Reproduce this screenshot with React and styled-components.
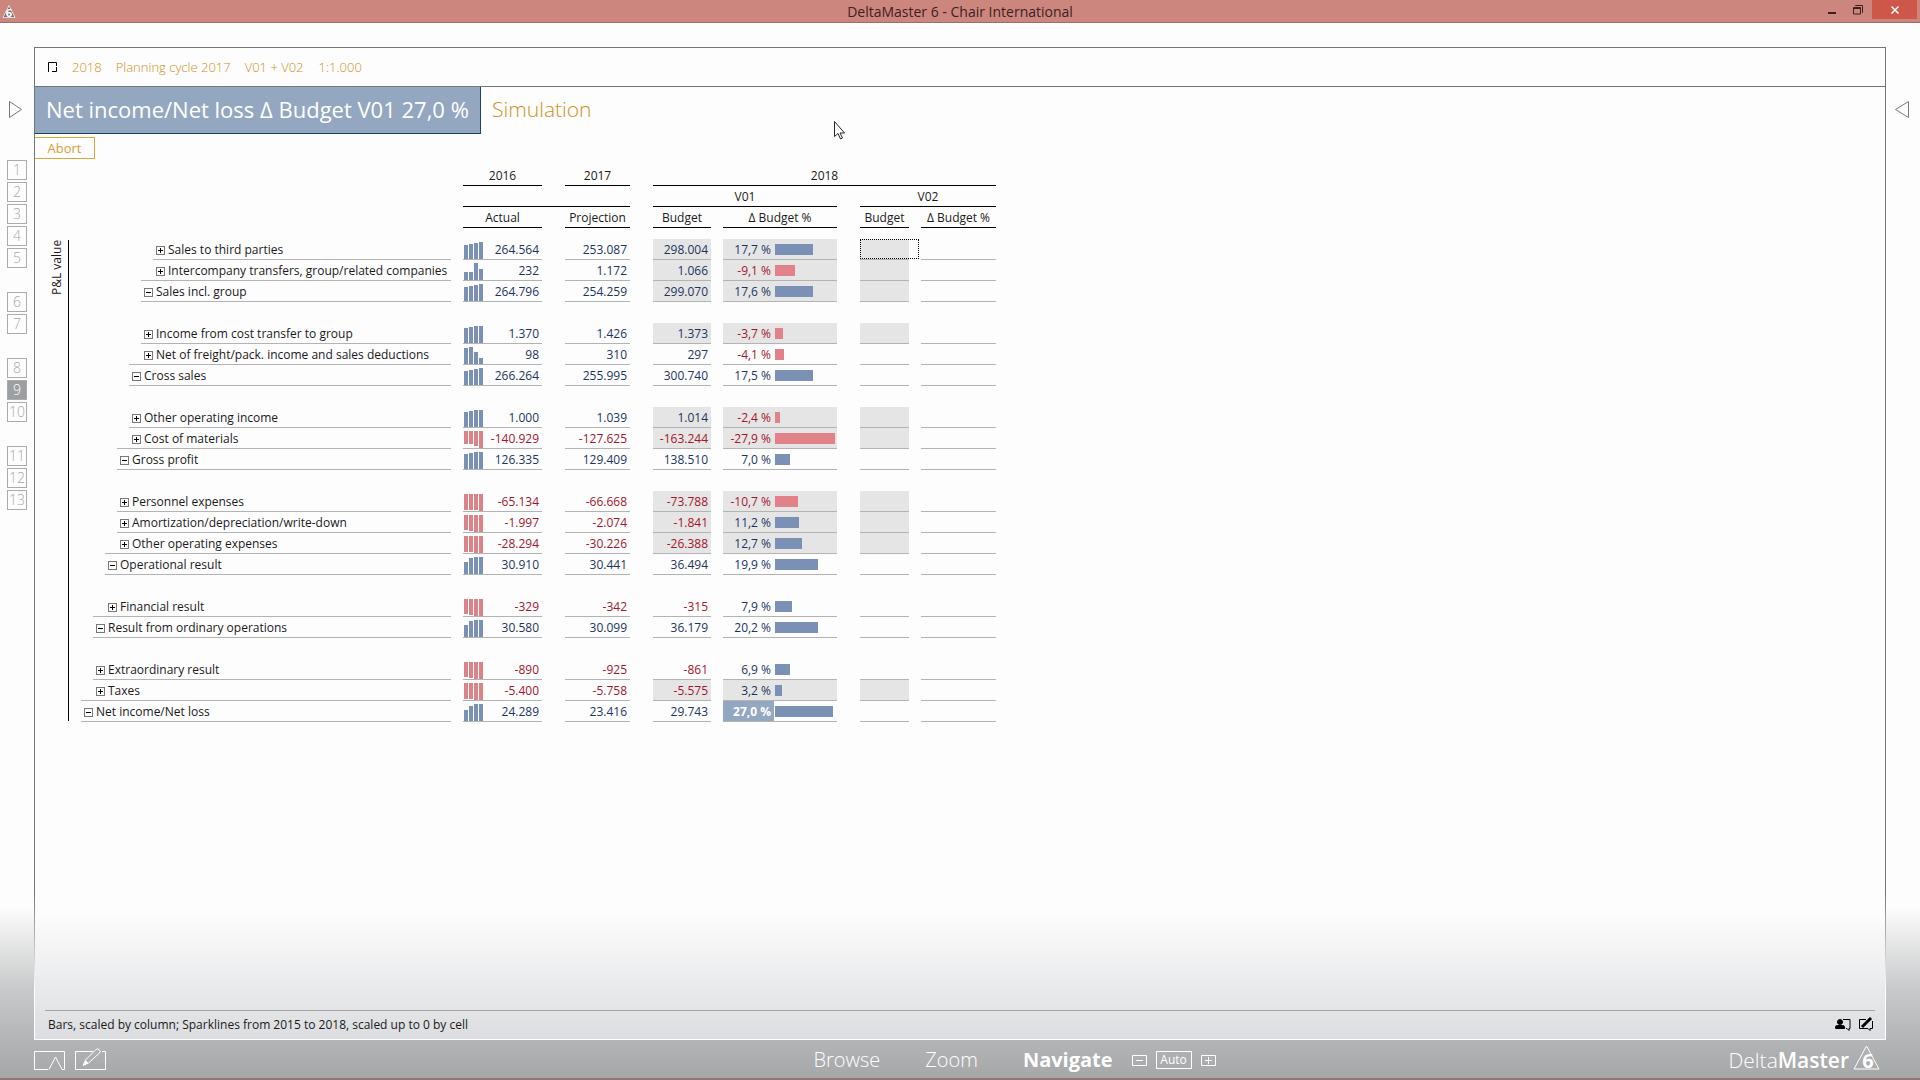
import React from 'react'
import styled, { createGlobalStyle } from 'styled-components'

const GlobalStyle = createGlobalStyle`
  * {
    box-sizing: border-box;
  }
  body {
    margin: 0;
    font-family: 'Open Sans', 'Noto Sans', sans-serif;
    font-size: 12px;
    line-height: 20px;
    color: #1a1a1a;
  }
  button {
    font: inherit;
    color: inherit;
    padding: 0;
    border: 0;
    background: none;
  }
  svg {
    display: block;
    overflow: visible;
  }
`

const Window = styled.div`
  display: flex;
  flex-direction: column;
  min-height: 100vh;
  background: linear-gradient(
    #fdfdfd 0 calc(100% - 172px),
    #c9cacb calc(100% - 90px),
    #b4b5b6 calc(100% - 40px),
    #a6a7a9
  );
  border-bottom: 2px solid #8f7477;
`

const TitleBar = styled.header`
  display: grid;
  grid-template-columns: 1fr auto 1fr;
  height: 23px;
  background: #cd867e;
  border-bottom: 1px solid #96706d;
`

const AppIcon = styled.div`
  padding: 5px 1px;
`

const TitleText = styled.div`
  font-size: 14px;
  line-height: 24px;
  color: #3c211e;
`

const WindowButtons = styled.div`
  display: flex;
  justify-content: flex-end;
  padding-right: 3px;
`

const WindowButton = styled.button`
  display: flex;
  align-items: center;
  justify-content: center;
  width: ${props => (props.$close ? 45 : 26)}px;
  height: 19px;
  background: ${props => (props.$close ? '#cd5849' : 'none')};
`

const Body = styled.div`
  flex: 1;
  display: grid;
  grid-template-columns: 34px 1fr 34px;
  padding-top: 24px;
`

const Side = styled.aside`
  display: flex;
  flex-direction: column;
  align-items: flex-start;
  padding: 54px 7px 0;
`

const ArrowButton = styled.button`
  height: 17px;
  margin-bottom: 42px;
`

const PageList = styled.nav`
  display: flex;
  flex-direction: column;
  gap: 2px;
`

const PageButton = styled.button`
  width: 20px;
  height: 20px;
  margin-top: ${props => (props.$gap ? 22 : 0)}px;
  border: 1px solid #a9abad;
  background: ${props => (props.$active ? '#9c9ea0' : 'none')};
  color: ${props => (props.$active ? '#fff' : '#a8a8aa')};
  font-size: 14px;
  font-weight: 300;
  line-height: 18px;
`

const Panel = styled.main`
  display: flex;
  flex-direction: column;
  border: 1px solid;
  border-image: linear-gradient(#6f777c 0 calc(100% - 150px), #fff calc(100% - 50px)) 1;
  background: linear-gradient(#fdfdfd 0 calc(100% - 125px), #dcdde0);
`

const ViewBar = styled.div`
  display: flex;
  align-items: center;
  height: 39px;
  padding-left: 12px;
  border-bottom: 1px solid #6f777c;
  font-size: 13px;
  font-weight: 300;
  color: #cf9020;
`

const ViewLink = styled.a`
  margin-left: ${props => props.$space}px;
  color: inherit;
  text-decoration: none;
`

const Heading = styled.div`
  display: flex;
  font-size: 22px;
  line-height: 44px;
`

const Measure = styled.h1`
  width: 446px;
  margin: 0;
  padding: 0 0 2px 11px;
  border-right: 1px solid #1d3f6b;
  border-bottom: 1px solid #1d3f6b;
  background: #94a7c1;
  color: #fff;
  font-size: inherit;
  font-weight: 500;
  white-space: nowrap;
`

const Mode = styled.div`
  padding-left: 11px;
  color: #cf9020;
  font-size: 21px;
  font-weight: 300;
`

const AbortButton = styled.button`
  align-self: flex-start;
  width: 60px;
  height: 22px;
  margin-top: 3px;
  border: 1px solid #dba63c;
  border-left: 0;
  color: #d99e30;
  font-size: 13px;
`

const Report = styled.div`
  display: flex;
  padding: 6px 0 0 14px;
`

// Text runs bottom to top, so the rotated left border is the line on the right.
const AxisTitle = styled.div`
  width: 20px;
  height: 481px;
  margin-top: 75px;
  border-left: 1px solid #000;
  line-height: 16px;
  text-align: right;
  writing-mode: vertical-rl;
  transform: rotate(180deg);
`

const Table = styled.table`
  width: 915px;
  margin-left: 12px;
  table-layout: fixed;
  border-collapse: separate;
  border-spacing: 0;
`

const Head = styled.th`
  height: 21px;
  padding: 2px 0 0;
  border-bottom: 1px solid #000;
  font-weight: 400;
  line-height: 18px;
  text-align: center;
`

const Label = styled.th`
  height: 21px;
  padding: 0 0 0 ${props => props.$indent}px;
  font-weight: 400;
  text-align: left;
  white-space: nowrap;
`

const LabelLine = styled.div`
  display: flex;
  align-items: center;
  gap: 3px;
  height: 21px;
  padding-top: 2px;
  padding-left: ${props => props.$pad}px;
  border-bottom: 1px solid #b3b3b3;
`

const Toggle = styled.button`
  height: 9px;
`

const Cell = styled.td`
  height: 21px;
  padding: 0;
  border-bottom: 1px solid #b3b3b3;
  background: ${props => (props.$shaded ? '#e5e5e5' : 'none')};
  color: ${props => (props.$negative ? '#a3152b' : '#1c355e')};
`

const Blank = styled.td`
  padding: 0;
`

const Amount = styled.div`
  display: flex;
  align-items: center;
  justify-content: space-between;
  height: 20px;
  padding: 2px 3px 0 1px;
`

const Value = styled.span`
  margin-left: auto;
`

const Change = styled.div`
  display: flex;
  align-items: center;
  gap: 1px;
  height: 20px;
`

const ChangeValue = styled.span`
  width: 51px;
  height: 20px;
  padding-right: 3px;
  text-align: right;
  line-height: 22px;
  background: ${props => (props.$selected ? '#94a7c1' : 'none')};
  color: ${props => (props.$selected ? '#fff' : 'inherit')};
  font-weight: ${props => (props.$selected ? 700 : 400)};
`

const Bar = styled.span`
  height: 11px;
  background: ${props => (props.$negative ? '#e08288' : '#7a91b5')};
`

const Focus = styled.div`
  position: relative;
  height: 20px;
  &::after {
    content: '';
    position: absolute;
    inset: 0 -10px 0 0;
    border: 1px dotted #000;
  }
`

const Footer = styled.footer`
  display: flex;
  align-items: center;
  height: 29px;
  margin: auto 10px 0;
  padding: 0 1px 0 3px;
  border-top: 1px solid #a3a4a6;
`

const FooterIcons = styled.div`
  display: flex;
  gap: 7px;
  margin-left: auto;
`

const BottomBar = styled.div`
  display: grid;
  grid-template-columns: 1fr auto 1fr;
  align-items: center;
  height: 38px;
  padding: 2px 40px 0 34px;
  color: #fff;
`

const Tools = styled.div`
  display: flex;
  gap: 10px;
`

const Modes = styled.nav`
  display: flex;
  align-items: center;
  gap: 45px;
  padding-left: 12px;
`

const ModeButton = styled.button`
  font-size: 20px;
  font-weight: ${props => (props.$active ? 700 : 300)};
  line-height: 36px;
`

const Right = styled.div`
  display: flex;
  align-items: center;
  justify-content: space-between;
  padding-left: 19px;
`

const ZoomBox = styled.div`
  display: flex;
  align-items: center;
  gap: 9px;
`

const AutoButton = styled.button`
  width: 36px;
  height: 18px;
  border: 1px solid #fff;
  line-height: 16px;
`

const Brand = styled.div`
  display: flex;
  align-items: center;
  gap: 4px;
  font-size: 21px;
  font-weight: 300;
  strong {
    font-weight: 600;
  }
`

const Cursor = styled.svg`
  position: absolute;
  left: 834px;
  top: 121px;
`

// level, open, label, sparkline, actual, projection, budget, change, bar width, input cells shaded
const rows = [
  [6, 0, 'Sales to third parties', [14, 15, 16, 17], '264.564', '253.087', '298.004', '17,7 %', 38, 1],
  [6, 0, 'Intercompany transfers, group/related companies', [8, 8, 17, 11], '232', '1.172', '1.066', '-9,1 %', 20, 1],
  [5, 1, 'Sales incl. group', [14, 15, 16, 17], '264.796', '254.259', '299.070', '17,6 %', 38, 1],
  null,
  [5, 0, 'Income from cost transfer to group', [15, 16, 17, 17], '1.370', '1.426', '1.373', '-3,7 %', 8, 1],
  [5, 0, 'Net of freight/pack. income and sales deductions', [16, 17, 12, 6], '98', '310', '297', '-4,1 %', 9, 0],
  [4, 1, 'Cross sales', [14, 15, 16, 17], '266.264', '255.995', '300.740', '17,5 %', 38, 0],
  null,
  [4, 0, 'Other operating income', [15, 16, 17, 17], '1.000', '1.039', '1.014', '-2,4 %', 5, 1],
  [4, 0, 'Cost of materials', [-13, -13, -15, -17], '-140.929', '-127.625', '-163.244', '-27,9 %', 60, 1],
  [3, 1, 'Gross profit', [15, 16, 17, 17], '126.335', '129.409', '138.510', '7,0 %', 15, 0],
  null,
  [3, 0, 'Personnel expenses', [-16, -16, -16, -17], '-65.134', '-66.668', '-73.788', '-10,7 %', 23, 1],
  [3, 0, 'Amortization/depreciation/write-down', [-15, -16, -17, -17], '-1.997', '-2.074', '-1.841', '11,2 %', 24, 1],
  [3, 0, 'Other operating expenses', [-16, -16, -17, -17], '-28.294', '-30.226', '-26.388', '12,7 %', 27, 1],
  [2, 1, 'Operational result', [12, 16, 17, 17], '30.910', '30.441', '36.494', '19,9 %', 43, 0],
  null,
  [2, 0, 'Financial result', [-15, -16, -17, -17], '-329', '-342', '-315', '7,9 %', 17, 0],
  [1, 1, 'Result from ordinary operations', [12, 16, 17, 17], '30.580', '30.099', '36.179', '20,2 %', 43, 0],
  null,
  [1, 0, 'Extraordinary result', [-15, -16, -17, -17], '-890', '-925', '-861', '6,9 %', 15, 0],
  [1, 0, 'Taxes', [-16, -16, -17, -17], '-5.400', '-5.758', '-5.575', '3,2 %', 7, 1],
  [0, 1, 'Net income/Net loss', [11, 15, 17, 17], '24.289', '23.416', '29.743', '27,0 %', 58, 0],
]

const columns = [370, 12, 79, 23, 65, 23, 58, 12, 114, 23, 49, 12, 75]

const pages = [1, 2, 3, 4, 5, 6, 7, 8, 9, 10, 11, 12, 13]

const Sparkline = ({ values }) => (
  <svg width="19" height="17" aria-hidden="true">
    {values.map((v, i) => (
      <rect
        key={i}
        x={i * 5}
        y={v < 0 ? 0 : 17 - v}
        width="4"
        height={Math.abs(v)}
        fill={v < 0 ? '#dc8389' : '#7a91b5'}
      />
    ))}
  </svg>
)

const ToggleIcon = ({ open }) => (
  <svg width="9" height="9" fill="none">
    <rect x=".5" y=".5" width="8" height="8" stroke="#777" />
    <path d={open ? 'M2 4.5h5' : 'M2 4.5h5M4.5 2v5'} stroke="#000" />
  </svg>
)

const negative = text => text.startsWith('-')

const ReportRow = ({ row, next, focused, selected }) => {
  const [level, open, label, spark, actual, projection, budget, change, bar, shaded] = row
  const lineLevel = next ? Math.min(level, next[0]) : level

  return (
    <tr>
      <Label scope="row" $indent={lineLevel * 12}>
        <LabelLine $pad={3 + (level - lineLevel) * 12}>
          <Toggle aria-label={open ? 'Collapse' : 'Expand'}>
            <ToggleIcon open={open} />
          </Toggle>
          {label}
        </LabelLine>
      </Label>
      <Blank />
      <Cell $negative={negative(actual)}>
        <Amount>
          <Sparkline values={spark} />
          <Value>{actual}</Value>
        </Amount>
      </Cell>
      <Blank />
      <Cell $negative={negative(projection)}>
        <Amount>
          <Value>{projection}</Value>
        </Amount>
      </Cell>
      <Blank />
      <Cell $negative={negative(budget)} $shaded={shaded}>
        <Amount>
          <Value>{budget}</Value>
        </Amount>
      </Cell>
      <Blank />
      <Cell $negative={negative(change)} $shaded={shaded}>
        <Change>
          <ChangeValue $selected={selected}>{change}</ChangeValue>
          <Bar $negative={negative(change)} style={{ width: bar }} />
        </Change>
      </Cell>
      <Blank />
      <Cell $shaded={shaded}>{focused ? <Focus /> : null}</Cell>
      <Blank />
      <Cell />
    </tr>
  )
}

const ReportTable = () => (
  <Table>
    <colgroup>
      {columns.map((width, i) => (
        <col key={i} style={{ width }} />
      ))}
    </colgroup>
    <thead>
      <tr>
        <Blank colSpan={2} />
        <Head>2016</Head>
        <Blank />
        <Head>2017</Head>
        <Blank />
        <Head colSpan={7}>2018</Head>
      </tr>
      <tr>
        <Blank colSpan={2} />
        <Head colSpan={3} />
        <Blank />
        <Head colSpan={3}>V01</Head>
        <Blank />
        <Head colSpan={3}>V02</Head>
      </tr>
      <tr>
        <Blank colSpan={2} />
        <Head>Actual</Head>
        <Blank />
        <Head>Projection</Head>
        <Blank />
        <Head>Budget</Head>
        <Blank />
        <Head>Δ Budget %</Head>
        <Blank />
        <Head>Budget</Head>
        <Blank />
        <Head>Δ Budget %</Head>
      </tr>
      <tr>
        <Blank colSpan={13} style={{ height: 11 }} />
      </tr>
    </thead>
    <tbody>
      {rows.map((row, i) =>
        row ? (
          <ReportRow
            key={i}
            row={row}
            next={rows[i + 1]}
            focused={i === 0}
            selected={i === rows.length - 1}
          />
        ) : (
          <tr key={i}>
            <Blank colSpan={13} style={{ height: 21 }} />
          </tr>
        )
      )}
    </tbody>
  </Table>
)

const App = () => (
  <Window>
    <GlobalStyle />
    <TitleBar>
      <AppIcon>
        <svg width="19" height="16" viewBox="0 0 19 16">
          <path d="M8 .5L14 12.500H2z" fill="#75707a" stroke="#ddd" />
          <text x="8" y="12" fontSize="11" fontWeight="700" fill="#fff" textAnchor="middle">6</text>
        </svg>
      </AppIcon>
      <TitleText>DeltaMaster 6 - Chair International</TitleText>
      <WindowButtons>
        <WindowButton aria-label="Minimize">
          <svg width="10" height="10"><path d="M0 8h8" stroke="#3c211e" strokeWidth="2" /></svg>
        </WindowButton>
        <WindowButton aria-label="Restore">
          <svg width="10" height="10" fill="none" stroke="#3c211e">
            <path d="M-.5 2.500h7v6.500h-7zM-.5 3.500h7M1.500 1V.5h7v7H8" />
          </svg>
        </WindowButton>
        <WindowButton $close aria-label="Close">
          <svg width="8" height="8" stroke="#fff" strokeWidth="1.500"><path d="M.5 .5l7 7M7.500 .5l-7 7" /></svg>
        </WindowButton>
      </WindowButtons>
    </TitleBar>
    <Body>
      <Side>
        <ArrowButton aria-label="Next page">
          <svg width="17" height="17" fill="none" stroke="#777"><path d="M2.500 .5v16l12-8z" /></svg>
        </ArrowButton>
        <PageList>
          {pages.map(n => (
            <PageButton key={n} $gap={[6, 8, 11].includes(n)} $active={n === 9}>{n}</PageButton>
          ))}
        </PageList>
      </Side>
      <Panel>
        <ViewBar>
          <svg width="10" height="10" fill="none" stroke="#000">
            <path d="M1.500 10V.5H9.500V4M5 9.500H9.500V5" />
          </svg>
          <ViewLink href="#" $space={15}>2018</ViewLink>
          <ViewLink href="#" $space={14}>Planning cycle 2017</ViewLink>
          <ViewLink href="#" $space={14}>V01 + V02</ViewLink>
          <ViewLink href="#" $space={15}>1:1.000</ViewLink>
        </ViewBar>
        <Heading>
          <Measure>Net income/Net loss Δ Budget V01 27,0 %</Measure>
          <Mode>Simulation</Mode>
        </Heading>
        <AbortButton>Abort</AbortButton>
        <Report>
          <AxisTitle>P&amp;L value</AxisTitle>
          <ReportTable />
        </Report>
        <Footer>
          Bars, scaled by column; Sparklines from 2015 to 2018, scaled up to 0 by cell
          <FooterIcons>
            <svg width="16" height="14" fill="none" stroke="#000">
              <circle cx="5" cy="4" r="2.500" fill="#000" />
              <path d="M.5 10.500V9q0-1.500 2-1.500h5q2 0 2 1.500v1.500z" fill="#000" />
              <path d="M8 1.500h7v9h-1v2l-2-2h-1" />
            </svg>
            <svg width="16" height="14" fill="none" stroke="#000">
              <path d="M8 1.500H1.500v9H10l2 2v-2h2.500V3" />
              <path d="M4 9L13 0" strokeWidth="3" />
            </svg>
          </FooterIcons>
        </Footer>
      </Panel>
      <Side>
        <ArrowButton aria-label="Previous page">
          <svg width="17" height="17" fill="none" stroke="#777"><path d="M15.500 .5v16L2.500 8.500z" /></svg>
        </ArrowButton>
      </Side>
    </Body>
    <BottomBar>
      <Tools>
        <button aria-label="Presentation">
          <svg width="31" height="19" fill="none" stroke="#fff">
            <path d="M14 18.500H.5V.5h30v18H28L21.500 6 15 18.500" />
          </svg>
        </button>
        <button aria-label="Edit">
          <svg width="31" height="19" fill="none" stroke="#fff">
            <path d="M18 .5H.5v18h30V.5H27M9 13.500l1.500-4.500L21-1.500q2-1.500 3.500.5t0 3L13.500 12z" />
            <path d="M8 14.500l2.500-5 2.500 2.500z" fill="#fff" />
          </svg>
        </button>
      </Tools>
      <Modes>
        <ModeButton>Browse</ModeButton>
        <ModeButton>Zoom</ModeButton>
        <ModeButton $active>Navigate</ModeButton>
      </Modes>
      <Right>
        <ZoomBox>
          <button aria-label="Smaller">
            <svg width="15" height="11" fill="none" stroke="#fff"><path d="M.5 .5h14v10H.5zM4 5.500h7" /></svg>
          </button>
          <AutoButton>Auto</AutoButton>
          <button aria-label="Larger">
            <svg width="15" height="11" fill="none" stroke="#fff"><path d="M.5 .5h14v10H.5zM4 5.500h7M7.500 2v7" /></svg>
          </button>
        </ZoomBox>
        <Brand>
          <span>Delta<strong>Master</strong></span>
          <svg width="27" height="32" fill="none" stroke="#fff">
            <path d="M13.500 2L26 25H1z" />
            <text x="15" y="24" fontSize="20" fontWeight="700" fill="#fff" stroke="none" textAnchor="middle">6</text>
          </svg>
        </Brand>
      </Right>
    </BottomBar>
    <Cursor width="12" height="19" fill="#fff" stroke="#222">
      <path d="M.5 .5v15l3.500-3 2.500 5.500 2-1-2.500-5h4.500z" />
    </Cursor>
  </Window>
)

export default App
